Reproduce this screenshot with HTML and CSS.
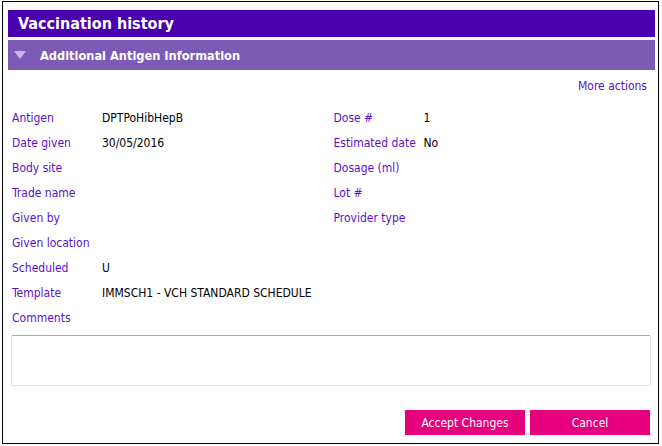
FILE: index.html
```html
<!DOCTYPE html>
<html>
<head>
<meta charset="utf-8">
<link rel="stylesheet" href="styles.css">
</head>
<body>
<div class="dialog">
  <div class="title">Vaccination history</div>
  <div class="section">
    <span class="tri"></span>
    <span class="section-text">Additional Antigen Information</span>
  </div>
  <div class="actions-row"><span class="more">More actions</span></div>
  <div class="fields">
    <div class="col">
      <div class="row"><span class="lbl">Antigen</span><span class="val">DPTPoHibHepB</span></div>
      <div class="row"><span class="lbl">Date given</span><span class="val">30/05/2016</span></div>
      <div class="row"><span class="lbl">Body site</span><span class="val"></span></div>
      <div class="row"><span class="lbl">Trade name</span><span class="val"></span></div>
      <div class="row"><span class="lbl">Given by</span><span class="val"></span></div>
      <div class="row"><span class="lbl">Given location</span><span class="val"></span></div>
      <div class="row"><span class="lbl">Scheduled</span><span class="val">U</span></div>
      <div class="row"><span class="lbl">Template</span><span class="val">IMMSCH1 - VCH STANDARD SCHEDULE</span></div>
      <div class="row"><span class="lbl">Comments</span><span class="val"></span></div>
    </div>
    <div class="col">
      <div class="row"><span class="lbl">Dose #</span><span class="val">1</span></div>
      <div class="row"><span class="lbl">Estimated date</span><span class="val">No</span></div>
      <div class="row"><span class="lbl">Dosage (ml)</span><span class="val"></span></div>
      <div class="row"><span class="lbl">Lot #</span><span class="val"></span></div>
      <div class="row"><span class="lbl">Provider type</span><span class="val"></span></div>
    </div>
  </div>
  <div class="comments"></div>
  <div class="buttons">
    <button class="btn">Accept Changes</button>
    <button class="btn">Cancel</button>
  </div>
</div>
</body>
</html>
```

FILE: styles.css
```css
html, body {
  margin: 0;
  padding: 0;
  background: #fff;
}
body {
  font-family: "DejaVu Sans Condensed", "DejaVu Sans", sans-serif;
  font-stretch: condensed;
  font-size: 12px;
  color: #000;
}
.dialog {
  margin: 1px 0 0 2px;
  width: 647px;
  height: 433px;
  border: 1px solid #000;
  padding: 8px 3px 0 5px;
}
.title {
  height: 27px;
  background: #4b00b0;
  color: #fff;
  font-weight: bold;
  font-size: 16px;
  line-height: 27px;
  padding-left: 10px;
}
.section {
  margin-top: 3px;
  height: 30px;
  background: #7b5bb5;
  display: flex;
  align-items: center;
  padding-left: 6px;
}
.tri {
  width: 0;
  height: 0;
  border-left: 6px solid transparent;
  border-right: 6px solid transparent;
  border-top: 8px solid #c8b8e8;
}
.section-text {
  margin-left: 14px;
  color: #fff;
  font-weight: bold;
  font-size: 12.7px;
}
.actions-row {
  display: flex;
  justify-content: flex-end;
  padding: 9px 8px 0 0;
  line-height: 14px;
}
.more {
  color: #5c10c8;
}
.fields {
  display: flex;
  margin-top: 12px;
  padding-left: 4px;
}
.col {
  width: 324px;
}
.row {
  display: grid;
  grid-template-columns: 90px 1fr;
  height: 25px;
  align-items: center;
}
.lbl {
  color: #5c10c8;
}
.val {
  color: #000;
}
.comments {
  margin: 5px 0 0 3px;
  width: 638px;
  height: 49px;
  border: 1px solid #e2e2e6;
  border-top-color: #a8a8b0;
  border-radius: 2px;
}
.buttons {
  display: flex;
  justify-content: flex-end;
  gap: 5px;
  margin-top: 24px;
  padding-right: 5px;
}
.btn {
  width: 120px;
  height: 25px;
  background: #e6007e;
  color: #fff;
  border: 0;
  padding: 0;
  font-family: inherit;
  font-stretch: condensed;
  font-size: 12px;
}
```
